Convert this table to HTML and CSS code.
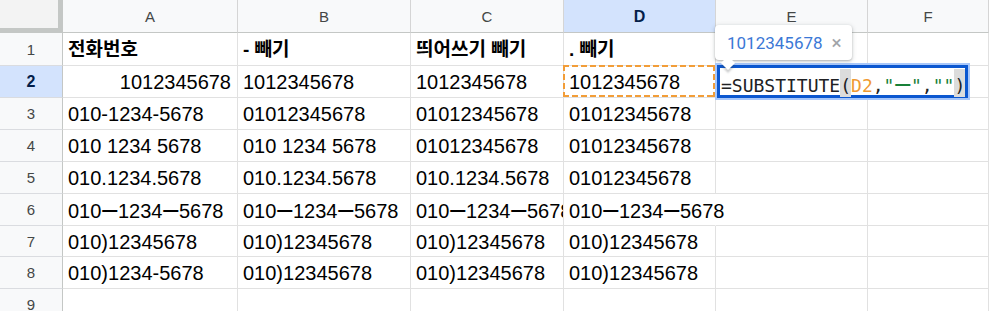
FILE: index.html
```html
<!DOCTYPE html>
<html lang="ko">
<head>
<meta charset="utf-8">
<title>Sheet</title>
<link rel="stylesheet" href="styles.css">
</head>
<body>
<div class="sheet">
  <div class="corner"></div>
  <div class="ch">A</div>
  <div class="ch">B</div>
  <div class="ch">C</div>
  <div class="ch sel">D</div>
  <div class="ch">E</div>
  <div class="ch">F</div>

  <div class="rh">1</div>
  <div class="c hd">전화번호</div>
  <div class="c hd">- 빼기</div>
  <div class="c hd">띄어쓰기 빼기</div>
  <div class="c hd">. 빼기</div>
  <div class="c"></div>
  <div class="c"></div>

  <div class="rh sel">2</div>
  <div class="c num">1012345678</div>
  <div class="c">1012345678</div>
  <div class="c">1012345678</div>
  <div class="c ref">1012345678</div>
  <div class="c"></div>
  <div class="c"></div>

  <div class="rh">3</div>
  <div class="c">010-1234-5678</div>
  <div class="c">01012345678</div>
  <div class="c">01012345678</div>
  <div class="c">01012345678</div>
  <div class="c"></div>
  <div class="c"></div>

  <div class="rh">4</div>
  <div class="c">010 1234 5678</div>
  <div class="c">010 1234 5678</div>
  <div class="c">01012345678</div>
  <div class="c">01012345678</div>
  <div class="c"></div>
  <div class="c"></div>

  <div class="rh">5</div>
  <div class="c">010.1234.5678</div>
  <div class="c">010.1234.5678</div>
  <div class="c">010.1234.5678</div>
  <div class="c">01012345678</div>
  <div class="c"></div>
  <div class="c"></div>

  <div class="rh">6</div>
  <div class="c">010<span class="j">ㅡ</span>1234<span class="j">ㅡ</span>5678</div>
  <div class="c">010<span class="j">ㅡ</span>1234<span class="j">ㅡ</span>5678</div>
  <div class="c">010<span class="j">ㅡ</span>1234<span class="j">ㅡ</span>5678</div>
  <div class="c spill">010<span class="j">ㅡ</span>1234<span class="j">ㅡ</span>5678</div>
  <div class="c"></div>
  <div class="c"></div>

  <div class="rh">7</div>
  <div class="c">010)12345678</div>
  <div class="c">010)12345678</div>
  <div class="c">010)12345678</div>
  <div class="c">010)12345678</div>
  <div class="c"></div>
  <div class="c"></div>

  <div class="rh">8</div>
  <div class="c">010)1234-5678</div>
  <div class="c">010)12345678</div>
  <div class="c">010)12345678</div>
  <div class="c">010)12345678</div>
  <div class="c"></div>
  <div class="c"></div>

  <div class="rh">9</div>
  <div class="c"></div>
  <div class="c"></div>
  <div class="c"></div>
  <div class="c"></div>
  <div class="c"></div>
  <div class="c"></div>

  <div class="tip"><span class="tip-val">1012345678</span><span class="tip-x">×</span></div>
  <div class="editor"><span>=SUBSTITUTE</span><span class="pm">(</span><span class="rf">D2</span>,<span class="st">"<span class="jb">ㅡ</span>"</span>,<span class="st">""</span><span class="pm">)</span></div>
</div>
</body>
</html>
```

FILE: styles.css
```css
* { box-sizing: border-box; }
html, body { margin: 0; padding: 0; background: #fff; }
body {
  overflow: hidden;
  font-family: "Liberation Sans", Arial, "Noto Sans CJK KR", sans-serif;
}
.sheet {
  position: relative;
  display: grid;
  grid-template-columns: 63px 175px 173px 153px 152px 152px 1fr;
  grid-template-rows: 33px 33px 32px 32px 32px 32px 32px 31px 32px 32px;
  width: 989px;
  height: 311px;
  overflow: hidden;
}
.corner {
  background: #f3f3f3;
  border-right: 1px solid #c4c7c5;
  border-bottom: 1px solid #c4c7c5;
  box-shadow: inset -4px -4px 0 #c4c7c5;
}
.ch, .rh {
  background: #f8f9fa;
  font-size: 15px;
  color: #444746;
  display: flex;
  align-items: center;
  justify-content: center;
}
.ch {
  border-right: 1px solid #d5d5d5;
  border-bottom: 1px solid #c4c7c5;
  padding-top: 1px;
}
.rh {
  border-right: 1px solid #c4c7c5;
  border-bottom: 1px solid #dadce0;
}
.sel {
  background: #d3e3fd;
  color: #041e49;
  font-weight: 700;
  font-size: 16px;
}
.c {
  border-right: 1px solid #e1e1e1;
  border-bottom: 1px solid #e1e1e1;
  padding: 2px 6px 0 5px;
  font-size: 20px;
  line-height: 29px;
  color: #000;
  white-space: nowrap;
  overflow: hidden;
}
.c.num { text-align: right; }
.c.hd {
  font-weight: 700;
  font-size: 19px;
  font-family: "Liberation Sans", "Noto Sans CJK KR", sans-serif;
}
.j { font-family: "Noto Sans CJK KR", sans-serif; font-size: 18px; font-weight: 700; }
.c.spill { overflow: visible; border-right-color: transparent; }
.c.ref { position: relative; overflow: visible; }
.c.ref::after {
  content: "";
  position: absolute;
  top: -1px;
  left: -1px;
  right: 0;
  bottom: 0;
  pointer-events: none;
  background:
    repeating-linear-gradient(90deg, #f29d38 0 6px, transparent 6px 9px) left top / 100% 2px no-repeat,
    repeating-linear-gradient(90deg, #f29d38 0 6px, transparent 6px 9px) left bottom / 100% 2px no-repeat,
    repeating-linear-gradient(180deg, #f29d38 0 6px, transparent 6px 9px) left top / 2px 100% no-repeat,
    repeating-linear-gradient(180deg, #f29d38 0 6px, transparent 6px 9px) right top / 2px 100% no-repeat;
}
.tip {
  position: absolute;
  left: 715px;
  top: 25px;
  width: 137px;
  height: 35px;
  background: #fff;
  border-radius: 4px;
  box-shadow: 0 1px 2px rgba(60, 64, 67, 0.3), 0 1px 4px 1px rgba(60, 64, 67, 0.15);
  display: flex;
  align-items: center;
  padding-left: 12px;
  gap: 9px;
  z-index: 3;
  font-family: Roboto, "Liberation Sans", sans-serif;
}
.tip::after {
  content: "";
  position: absolute;
  left: 8px;
  bottom: -8px;
  width: 10px;
  height: 10px;
  background: #fff;
  transform: rotate(45deg);
  box-shadow: 2px 2px 2px rgba(60, 64, 67, 0.25);
}
.tip-val { font-size: 17px; color: #3b78d6; position: relative; z-index: 1; }
.tip-x { font-size: 19px; color: #a0a4a8; position: relative; z-index: 1; }
.editor {
  position: absolute;
  left: 717px;
  top: 65px;
  width: 251px;
  height: 33px;
  background: #fff;
  border: 3px solid #0b57d0;
  box-shadow: 0 0 0 2px #a8c7fa;
  padding: 7px 0 0 1px;
  font-family: "DejaVu Sans Mono", "Noto Sans CJK KR", monospace;
  font-size: 18px;
  line-height: 21px;
  color: #202124;
  white-space: nowrap;
  z-index: 2;
}
.jb { font-weight: 700; }
.pm { background: #dcdcdc; padding-top: 6px; padding-bottom: 1px; }
.rf { color: #f09a32; }
.st { color: #188038; }
```
